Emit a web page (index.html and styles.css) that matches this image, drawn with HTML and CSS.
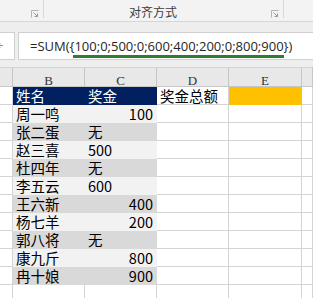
FILE: index.html
```html
<!DOCTYPE html>
<html lang="zh-CN">
<head>
<meta charset="utf-8">
<title>对齐方式</title>
<link rel="stylesheet" href="styles.css">
</head>
<body>
<div class="app">
  <div class="ribbon">
    <div class="grp g1">
      <svg class="launch" width="8" height="8" viewBox="0 0 8 8"><path d="M0.5 7.5V0.5H7.5" fill="none" stroke="#b5b5b5"/><path d="M2.5 2.5L6.5 6.5M3.5 6.5H6.5V3.5" fill="none" stroke="#9a9a9a"/></svg>
    </div>
    <div class="grp g2">
      <span class="glabel">对齐方式</span>
      <svg class="launch" width="8" height="8" viewBox="0 0 8 8"><path d="M0.5 7.5V0.5H7.5" fill="none" stroke="#b5b5b5"/><path d="M2.5 2.5L6.5 6.5M3.5 6.5H6.5V3.5" fill="none" stroke="#9a9a9a"/></svg>
    </div>
    <div class="grp g3"></div>
  </div>

  <div class="fbar">
    <div class="namebox"><span class="nb-glyph">÷</span></div>
    <div class="fbox"><span class="ftext">=SUM({100;0;500;0;600;400;200;0;800;900})</span></div>
    <div class="underline"></div>
  </div>

  <div class="sheet">
    <div class="hd"></div><div class="hd">B</div><div class="hd">C</div><div class="hd">D</div><div class="hd">E</div><div class="hd"></div>

    <div class="c"></div><div class="c f-blue">姓名</div><div class="c f-blue">奖金</div><div class="c">奖金总额</div><div class="c f-orange"></div><div class="c"></div>

    <div class="c"></div><div class="c f-l">周一鸣</div><div class="c f-l num">100</div><div class="c"></div><div class="c"></div><div class="c"></div>
    <div class="c"></div><div class="c f-d">张二蛋</div><div class="c f-d">无</div><div class="c"></div><div class="c"></div><div class="c"></div>
    <div class="c"></div><div class="c f-l">赵三喜</div><div class="c f-l">500</div><div class="c"></div><div class="c"></div><div class="c"></div>
    <div class="c"></div><div class="c f-d">杜四年</div><div class="c f-d">无</div><div class="c"></div><div class="c"></div><div class="c"></div>
    <div class="c"></div><div class="c f-l">李五云</div><div class="c f-l">600</div><div class="c"></div><div class="c"></div><div class="c"></div>
    <div class="c"></div><div class="c f-d">王六新</div><div class="c f-d num">400</div><div class="c"></div><div class="c"></div><div class="c"></div>
    <div class="c"></div><div class="c f-l">杨七羊</div><div class="c f-l num">200</div><div class="c"></div><div class="c"></div><div class="c"></div>
    <div class="c"></div><div class="c f-d">郭八将</div><div class="c f-d">无</div><div class="c"></div><div class="c"></div><div class="c"></div>
    <div class="c"></div><div class="c f-l">康九斤</div><div class="c f-l num">800</div><div class="c"></div><div class="c"></div><div class="c"></div>
    <div class="c"></div><div class="c f-d">冉十娘</div><div class="c f-d num">900</div><div class="c"></div><div class="c"></div><div class="c"></div>

    <div class="c"></div><div class="c"></div><div class="c"></div><div class="c"></div><div class="c"></div><div class="c"></div>
  </div>
</div>
</body>
</html>
```

FILE: styles.css
```css
html, body {
  margin: 0;
  padding: 0;
  background: #ffffff;
}
.app {
  width: 313px;
  height: 298px;
  overflow: hidden;
  font-family: "Noto Sans CJK SC", "Noto Sans", sans-serif;
}

/* ribbon */
.ribbon {
  display: flex;
  height: 21px;
  background: #f3f3f3;
  border-bottom: 1px solid #d6d6d6;
}
.grp {
  box-sizing: border-box;
  height: 18px;
  display: flex;
  align-items: flex-start;
}
.g1 {
  width: 44px;
  border-right: 1px solid #d8d8d8;
  justify-content: flex-end;
}
.g2 {
  width: 240px;
  border-right: 1px solid #d8d8d8;
}
.g3 {
  flex: 1;
}
.launch {
  margin-top: 10px;
  margin-right: 4px;
  flex: none;
}
.glabel {
  flex: 1;
  padding-left: 85px;
  padding-top: 5px;
  font-size: 12px;
  line-height: 14px;
  color: #3c3c3c;
  white-space: nowrap;
}

/* formula bar */
.fbar {
  position: relative;
  display: flex;
  gap: 3px;
  height: 45px;
  padding-top: 10px;
  box-sizing: border-box;
  background: #eeeeee;
}
.namebox {
  box-sizing: border-box;
  width: 25px;
  height: 28px;
  margin-left: -10px;
  background: #ffffff;
  border: 1px solid #d0d0d0;
  display: flex;
  align-items: center;
  justify-content: flex-end;
}
.nb-glyph {
  font-family: "DejaVu Sans", sans-serif;
  font-size: 10px;
  line-height: 12px;
  color: #8c8c8c;
  margin-right: 10px;
}
.fbox {
  flex: 1;
  box-sizing: border-box;
  height: 28px;
  background: #ffffff;
  border: 1px solid #d0d0d0;
  border-right: none;
  display: flex;
  align-items: center;
  padding-left: 11px;
}
.ftext {
  font-family: "Open Sans", "Liberation Sans", sans-serif;
  font-size: 13px;
  line-height: 16px;
  color: #262626;
  white-space: nowrap;
}
.underline {
  position: absolute;
  left: 73px;
  top: 33px;
  width: 211px;
  height: 3px;
  background: #2f7d32;
}

/* sheet */
.sheet {
  display: grid;
  grid-template-columns: 13px 72px 72px 72px 73px 1fr;
  grid-template-rows: 20px;
  grid-auto-rows: 18px;
}
.hd {
  box-sizing: border-box;
  background: #e8e8e8;
  border-top: 1px solid #d4d4d4;
  border-right: 1px solid #c6c6c6;
  border-bottom: 1px solid #c6c6c6;
  font-family: "Liberation Serif", "DejaVu Serif", serif;
  font-size: 13px;
  line-height: 13px;
  padding-top: 6px;
  text-align: center;
  color: #333333;
}
.c {
  box-sizing: border-box;
  border-right: 1px solid #d4d4d4;
  border-bottom: 1px solid #d4d4d4;
  font-size: 14.5px;
  line-height: 17px;
  padding: 0 3px 0 3px;
  color: #000000;
  white-space: nowrap;
}
.f-blue {
  background: #002060;
  border-color: transparent;
  color: #ffffff;
}
.f-orange {
  background: #ffc000;
  border-color: transparent;
}
.f-l {
  background: #f2f2f2;
  border-color: transparent;
}
.f-d {
  background: #d9d9d9;
  border-color: transparent;
}
.num {
  text-align: right;
}
```
